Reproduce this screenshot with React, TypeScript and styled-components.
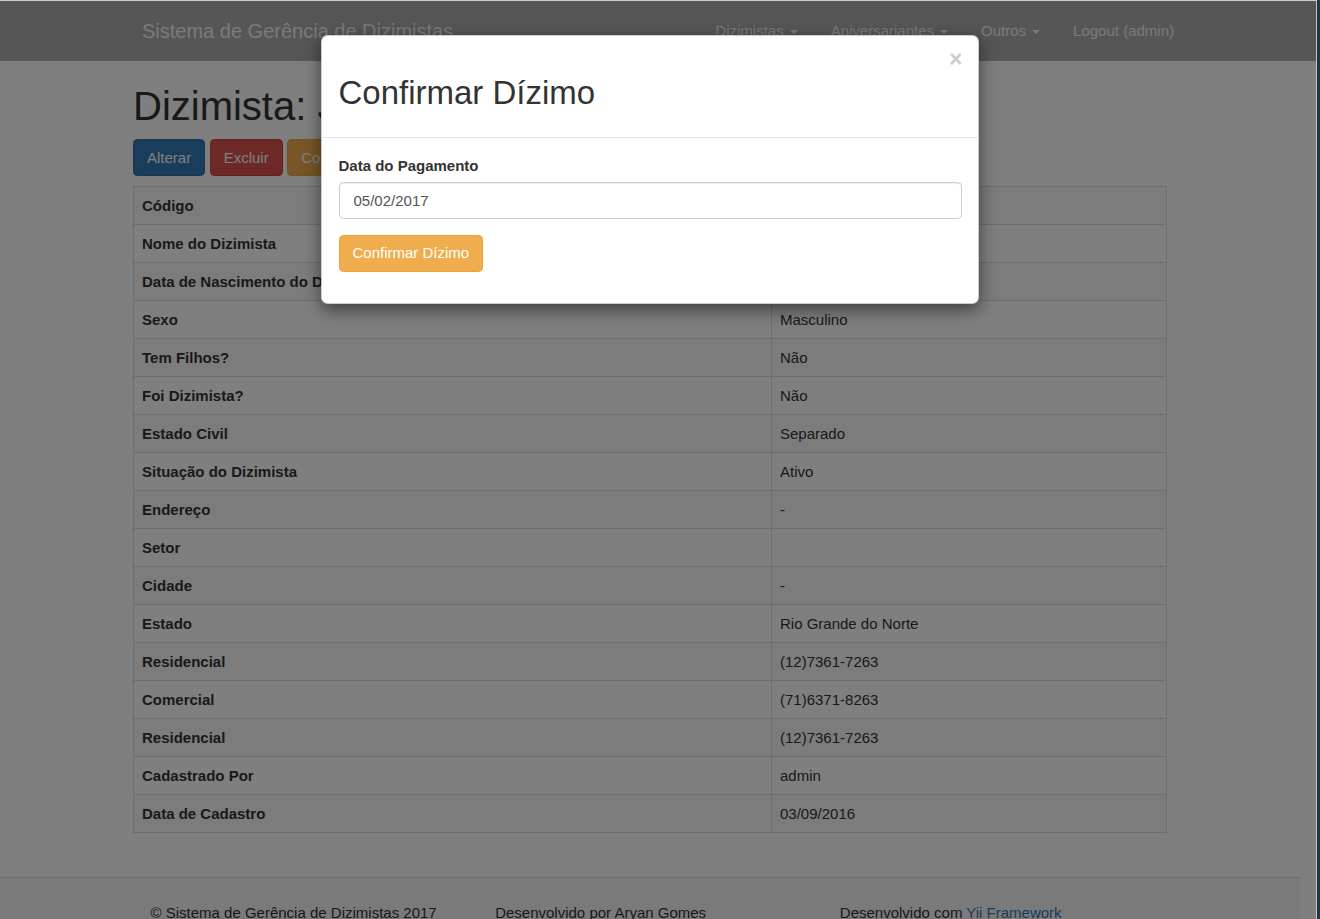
import React from 'react';
import styled, { createGlobalStyle } from 'styled-components';

const GlobalStyle = createGlobalStyle`
  html, body { margin: 0; padding: 0; background: #1f3944; }
  body {
    font-family: "Liberation Sans", Arial, Helvetica, sans-serif;
    font-size: 15px;
    line-height: 21px;
    color: #333;
  }
  * { box-sizing: border-box; }
`;

const Screen = styled.div`
  position: relative;
  width: 1317px;
  height: 919px;
  border-top: 1px solid #cdcdcd;
  border-right: 1px solid #c2c2c2;
  background: #fff;
  overflow: hidden;
`;

const Navbar = styled.nav`
  height: 60px;
  background: #acacac;
  display: flex;
  justify-content: center;
`;

const NavInner = styled.div`
  width: 1032px;
  display: flex;
  align-items: center;
  justify-content: space-between;
`;

const Brand = styled.a`
  font-size: 20px;
  line-height: 22px;
  color: #f4f4f4;
  text-decoration: none;
  margin-bottom: 1px;
`;

const NavList = styled.ul`
  list-style: none;
  margin: 0 -16.5px 2px 0;
  padding: 0;
  display: flex;
`;

const NavLink = styled.a`
  display: block;
  padding: 0 16.5px;
  font-size: 15px;
  line-height: 21px;
  color: #f4f4f4;
  text-decoration: none;
`;

const Caret = styled.span`
  display: inline-block;
  width: 0;
  height: 0;
  margin-left: 6px;
  vertical-align: middle;
  border-top: 4.4px solid currentColor;
  border-left: 4.4px solid transparent;
  border-right: 4.4px solid transparent;
`;

const Page = styled.div`
  width: 1316px;
  padding-right: 16px;
`;

const Container = styled.div`
  width: 1067px;
  margin: 0 auto;
  padding: 1px 16.5px 22px;
`;

const Title = styled.h1`
  font-size: 40px;
  line-height: 44px;
  font-weight: 500;
  margin: 22px 0 11px;
  color: #333;
`;

const ButtonRow = styled.div`
  display: flex;
  gap: 4.5px;
  margin-bottom: 10px;
`;

const tones = {
  primary: ['#337ab7', '#2e6da4'],
  danger: ['#d9534f', '#d43f3a'],
  warning: ['#f0ad4e', '#eea236'],
} as const;

type Tone = keyof typeof tones;

const Button = styled.button<{ $tone: Tone }>`
  font-family: inherit;
  font-size: 15px;
  line-height: 22px;
  padding: 6.5px 13px;
  border-radius: 4.4px;
  color: #fff;
  cursor: pointer;
  background: ${(p) => tones[p.$tone][0]};
  border: 1px solid ${(p) => tones[p.$tone][1]};
  white-space: nowrap;
`;

const Table = styled.table`
  width: 100%;
  border-collapse: collapse;
  table-layout: fixed;
  margin-bottom: 22px;
  border: 1px solid #ddd;
`;

const Row = styled.tr`
  &:nth-child(odd) { background: #f9f9f9; }
`;

const HeadCell = styled.th`
  width: 638px;
  text-align: left;
  font-weight: bold;
  padding: 8px 8px;
  line-height: 21px;
  border: 1px solid #ddd;
  white-space: nowrap;
  overflow: hidden;
`;

const Cell = styled.td`
  padding: 8px 8px;
  line-height: 21px;
  border: 1px solid #ddd;
`;

const Footer = styled.footer`
  height: 66px;
  background: #f5f5f5;
  border-top: 1px solid #ddd;
  padding-top: 24px;
`;

const FooterGrid = styled.div`
  width: 1067px;
  margin: 0 auto;
  padding: 0 16.5px;
  display: grid;
  grid-template-columns: repeat(3, 1fr);
`;

const FooterItem = styled.p`
  margin: 0;
  padding-left: 17.5px;
  white-space: nowrap;
`;

const FooterLink = styled.a`
  color: #337ab7;
  text-decoration: none;
`;

const Backdrop = styled.div`
  position: absolute;
  inset: 0;
  background: #000;
  opacity: 0.5;
`;

const ModalLayer = styled.div`
  position: absolute;
  inset: 0;
  padding-right: 16px;
`;

const Dialog = styled.div`
  width: 658px;
  margin: 34px auto 0;
  background: #fff;
  border: 1px solid rgba(0, 0, 0, 0.2);
  border-radius: 6.6px;
  box-shadow: 0 5.5px 16.5px rgba(0, 0, 0, 0.5);
`;

const ModalHeader = styled.div`
  display: flex;
  align-items: flex-start;
  padding: 16.5px;
  border-bottom: 1px solid #e5e5e5;
`;

const ModalTitle = styled.h2`
  flex: 1;
  margin: 22px 0 11px;
  font-size: 33px;
  line-height: 35px;
  font-weight: 500;
  color: #333;
`;

const Close = styled.button`
  border: 0;
  padding: 0;
  background: transparent;
  font-family: inherit;
  font-size: 23px;
  font-weight: bold;
  line-height: 1;
  color: #000;
  opacity: 0.2;
  margin-top: -5px;
  margin-right: -1px;
  cursor: pointer;
`;

const ModalBody = styled.div`
  padding: 16.5px 16.5px 15px;
`;

const FormGroup = styled.div`
  margin-bottom: 16px;
`;

const Label = styled.label`
  display: block;
  font-weight: bold;
  margin-bottom: 6px;
  line-height: 21px;
`;

const Input = styled.input`
  display: block;
  width: 100%;
  height: 37px;
  padding: 6.5px 14px;
  font-family: inherit;
  font-size: 15px;
  color: #555;
  background: #fff;
  border: 1px solid #ccc;
  border-radius: 4.4px;
  box-shadow: inset 0 1px 1px rgba(0, 0, 0, 0.075);
`;

const rows: [string, string][] = [
  ['Código', '7'],
  ['Nome do Dizimista', 'José Maria'],
  ['Data de Nascimento do Dizimista', '12/03/1980'],
  ['Sexo', 'Masculino'],
  ['Tem Filhos?', 'Não'],
  ['Foi Dizimista?', 'Não'],
  ['Estado Civil', 'Separado'],
  ['Situação do Dizimista', 'Ativo'],
  ['Endereço', '-'],
  ['Setor', ''],
  ['Cidade', '-'],
  ['Estado', 'Rio Grande do Norte'],
  ['Residencial', '(12)7361-7263'],
  ['Comercial', '(71)6371-8263'],
  ['Residencial', '(12)7361-7263'],
  ['Cadastrado Por', 'admin'],
  ['Data de Cadastro', '03/09/2016'],
];

export default function App() {
  return (
    <>
      <GlobalStyle />
      <Screen>
        <Navbar>
          <NavInner>
            <Brand href="#">Sistema de Gerência de Dizimistas</Brand>
            <NavList>
              <li>
                <NavLink href="#">Dizimistas<Caret /></NavLink>
              </li>
              <li>
                <NavLink href="#">Aniversariantes<Caret /></NavLink>
              </li>
              <li>
                <NavLink href="#">Outros<Caret /></NavLink>
              </li>
              <li>
                <NavLink href="#">Logout (admin)</NavLink>
              </li>
            </NavList>
          </NavInner>
        </Navbar>
        <Page>
          <Container>
            <Title>Dizimista: José Maria</Title>
            <ButtonRow>
              <Button $tone="primary">Alterar</Button>
              <Button $tone="danger">Excluir</Button>
              <Button $tone="warning">Confirmar Dízimo</Button>
            </ButtonRow>
            <Table>
              <tbody>
                {rows.map(([k, v], i) => (
                  <Row key={i}>
                    <HeadCell>{k}</HeadCell>
                    <Cell>{v}</Cell>
                  </Row>
                ))}
              </tbody>
            </Table>
          </Container>
          <Footer>
            <FooterGrid>
              <FooterItem>© Sistema de Gerência de Dizimistas 2017</FooterItem>
              <FooterItem>Desenvolvido por Aryan Gomes</FooterItem>
              <FooterItem>
                Desenvolvido com <FooterLink href="#">Yii Framework</FooterLink>
              </FooterItem>
            </FooterGrid>
          </Footer>
        </Page>
        <Backdrop />
        <ModalLayer>
          <Dialog>
            <ModalHeader>
              <ModalTitle>Confirmar Dízimo</ModalTitle>
              <Close aria-label="Fechar">×</Close>
            </ModalHeader>
            <ModalBody>
              <FormGroup>
                <Label>Data do Pagamento</Label>
                <Input defaultValue="05/02/2017" />
              </FormGroup>
              <FormGroup>
                <Button $tone="warning">Confirmar Dízimo</Button>
              </FormGroup>
            </ModalBody>
          </Dialog>
        </ModalLayer>
      </Screen>
    </>
  );
}
